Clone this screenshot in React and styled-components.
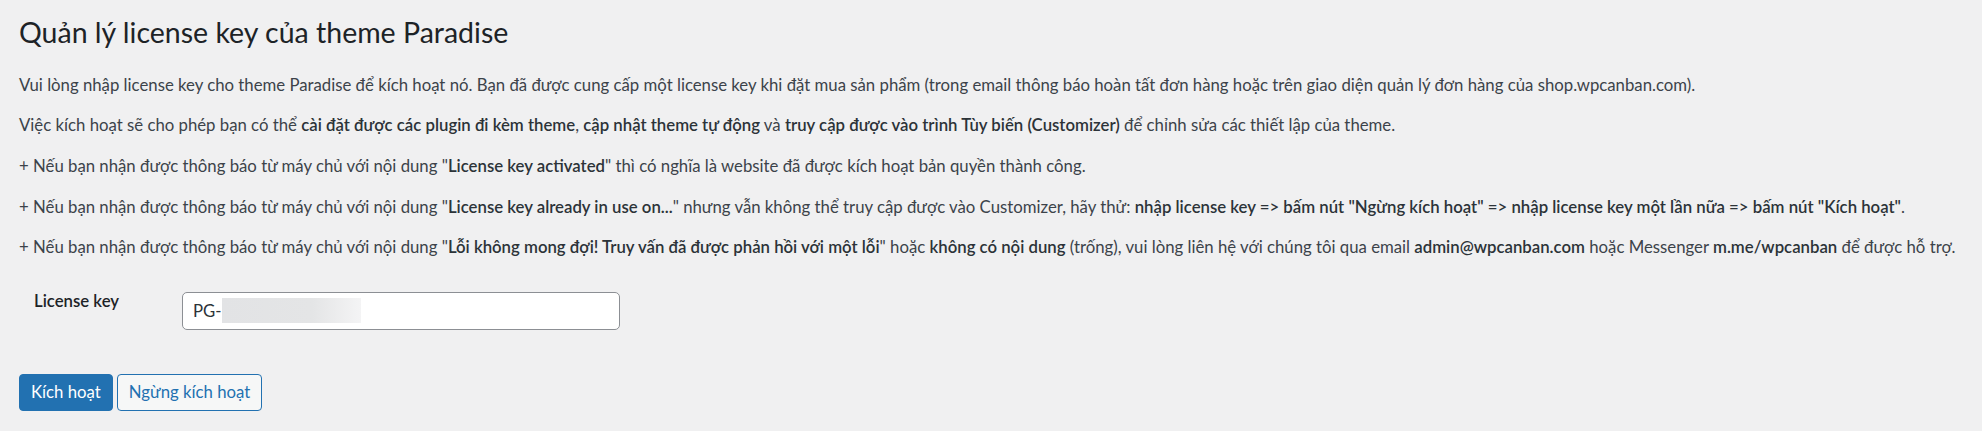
import styled, { createGlobalStyle } from "styled-components";

const GlobalStyle = createGlobalStyle`
  body {
    margin: 0;
    background: #f0f0f1;
    color: #3c434a;
    font-family: Lato, "Liberation Sans", sans-serif;
    font-size: 16.75px;
    line-height: 24.4px;
  }
`;

const Wrap = styled.div`
  padding: 3px 20px 0 19px;
`;

const Title = styled.h1`
  margin: 0;
  padding: 11px 0 5px;
  font-size: 28.5px;
  font-weight: 400;
  line-height: 37.4px;
  color: #1d2327;
`;

const Para = styled.p`
  margin: 16.25px 0;
`;

const Strong = styled.strong`
  font-weight: 600;
  color: #2c3338;
`;

const FormRow = styled.div`
  display: flex;
  align-items: flex-start;
  margin-top: 32.5px;
`;

const Label = styled.label`
  width: 148px;
  padding: 0 0 0 15px;
  margin-top: -3px;
  font-weight: 600;
  color: #1d2327;
`;

const KeyField = styled.div`
  display: flex;
  align-items: center;
  width: 438px;
  height: 38px;
  box-sizing: border-box;
  padding: 1px 10px 0;
  background: #fff;
  border: 1px solid #8c8f94;
  border-radius: 5px;
  color: #2c3338;
`;

const Blur = styled.span`
  display: inline-block;
  width: 139px;
  height: 25px;
  margin-top: -3px;
  background: linear-gradient(90deg, #e2e3e5 0%, #e4e5e6 65%, #f4f4f5 100%);
`;

const Actions = styled.div`
  display: flex;
  gap: 4px;
  margin-top: 44px;
`;

const Button = styled.button`
  height: 37px;
  padding: 0 11px;
  border-radius: 4px;
  font: inherit;
  cursor: pointer;
  border: 1px solid #2271b1;
  background: ${(p) => (p.$primary ? "#2271b1" : "#f6f7f7")};
  color: ${(p) => (p.$primary ? "#fff" : "#2271b1")};
`;

export default function App() {
  return (
    <>
      <GlobalStyle />
      <Wrap>
        <Title>Quản lý license key của theme Paradise</Title>
        <Para>
          Vui lòng nhập license key cho theme Paradise để kích hoạt nó. Bạn đã được cung cấp một license key khi đặt mua sản phẩm (trong email thông báo hoàn tất đơn hàng hoặc trên giao diện quản lý đơn hàng của shop.wpcanban.com).
        </Para>
        <Para>
          Việc kích hoạt sẽ cho phép bạn có thể <Strong>cài đặt được các plugin đi kèm theme</Strong>, <Strong>cập nhật theme tự động</Strong> và <Strong>truy cập được vào trình Tùy biến (Customizer)</Strong> để chỉnh sửa các thiết lập của theme.
        </Para>
        <Para>
          + Nếu bạn nhận được thông báo từ máy chủ với nội dung "<Strong>License key activated</Strong>" thì có nghĩa là website đã được kích hoạt bản quyền thành công.
        </Para>
        <Para>
          + Nếu bạn nhận được thông báo từ máy chủ với nội dung "<Strong>License key already in use on...</Strong>" nhưng vẫn không thể truy cập được vào Customizer, hãy thử: <Strong>nhập license key =&gt; bấm nút "Ngừng kích hoạt" =&gt; nhập license key một lần nữa =&gt; bấm nút "Kích hoạt"</Strong>.
        </Para>
        <Para>
          + Nếu bạn nhận được thông báo từ máy chủ với nội dung "<Strong>Lỗi không mong đợi! Truy vấn đã được phản hồi với một lỗi</Strong>" hoặc <Strong>không có nội dung</Strong> (trống), vui lòng liên hệ với chúng tôi qua email <Strong>admin@wpcanban.com</Strong> hoặc Messenger <Strong>m.me/wpcanban</Strong> để được hỗ trợ.
        </Para>
        <FormRow>
          <Label htmlFor="license">License key</Label>
          <KeyField id="license">
            PG-<Blur />
          </KeyField>
        </FormRow>
        <Actions>
          <Button $primary>Kích hoạt</Button>
          <Button>Ngừng kích hoạt</Button>
        </Actions>
      </Wrap>
    </>
  );
}
